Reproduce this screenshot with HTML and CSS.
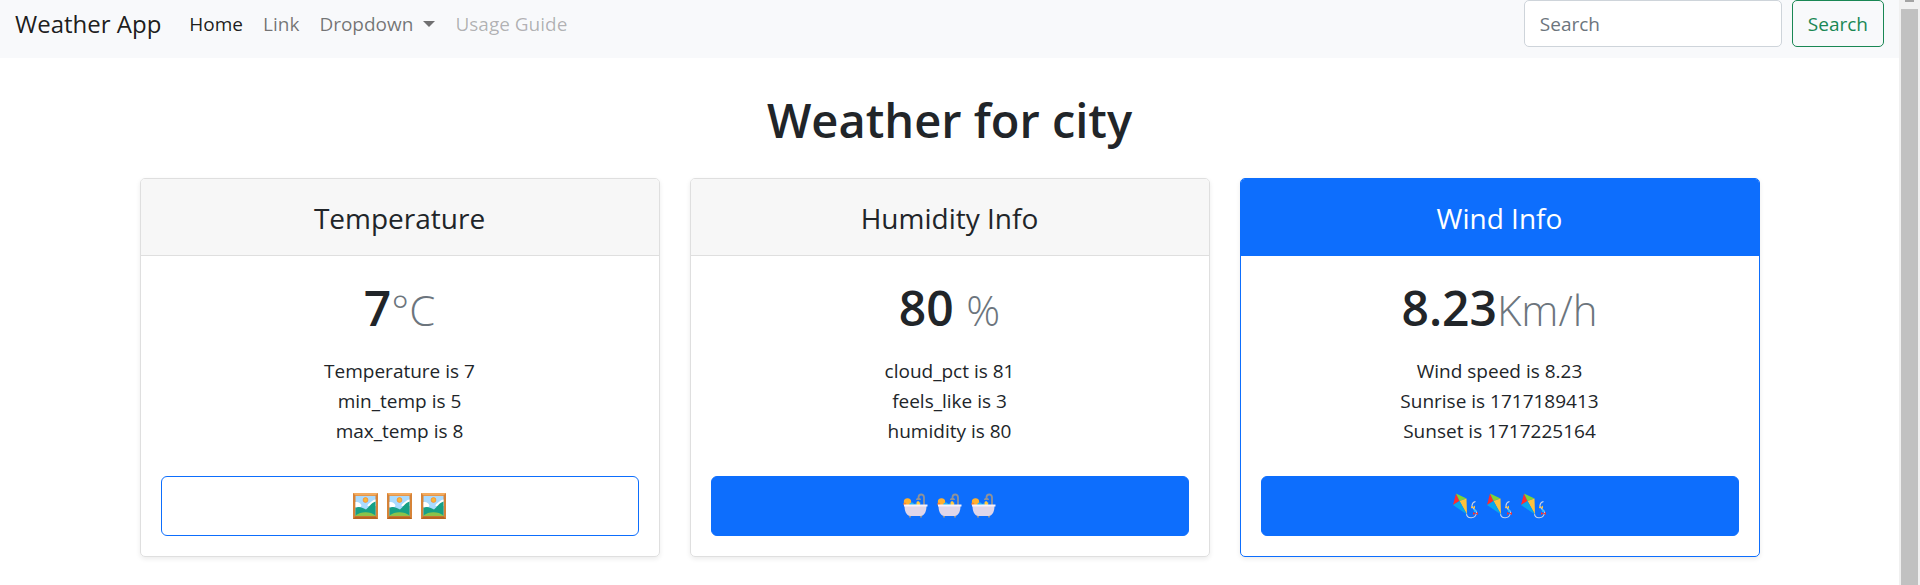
FILE: index.html
```html
<!DOCTYPE html>
<html lang="en">
<head>
<meta charset="utf-8">
<title>Weather App</title>
<link rel="stylesheet" href="styles.css">
</head>
<body>
<svg class="sprite" aria-hidden="true">
  <symbol id="frame" viewBox="0 0 25 26">
    <path fill="#d68338" d="M0 0h25v26H0z"/>
    <path fill="#f3ab5f" d="M0 0h25l-2.500 2.500h-20z"/>
    <path fill="#b86422" d="M0 26h25l-2.500-2.500h-20z"/>
    <path fill="#a9dbff" d="M2.500 3h20v20h-20z"/>
    <path fill="#fff" d="M2.500 9c3-.5 5 1 6 3.500l-1 1.500h-5zM22.500 6.500c-3 .5-4 2.500-6 3.500-1.500.8-2 2-2 3h8z"/>
    <path fill="#16a085" d="M2.500 15c3-2 6-1 10.500 1.500 3-2.500 5-6.500 9.500-8V23h-20z"/>
    <path fill="#8bc34a" d="M2.500 22.500c5-4.500 15-4.500 20 0v.5h-20z"/>
    <circle cx="12.500" cy="7" r="2.400" fill="#fbb833" stroke="#f58a35" stroke-width=".8"/>
  </symbol>
  <symbol id="bath" viewBox="0 0 25 26">
    <path fill="none" stroke="#8f9299" stroke-width="1.800" d="M21 13V4.500c0-4-5.500-4-5.500 0V6"/>
    <path fill="#8f9299" d="M13 7c0-3 5-3 5 0zM6 22h2v2.500H6zM17 22h2v2.500h-2z"/>
    <circle cx="4.500" cy="9" r="3.700" fill="#ffb02e"/>
    <circle cx="1.800" cy="11" r="1.500" fill="#ff822d"/>
    <path fill="#26b5f5" d="M6 12c1-3 4-3 5-1 2-1 5-1 7 1z"/>
    <path fill="#ffc83d" d="M13.500 9.500c1-2 3-1 3 0l1 .2-.8 2.300h-3z"/>
    <path fill="#dfd6ea" d="M1.500 13h22c0 6-2.500 10-6 10h-10c-3.500 0-6-4-6-10z"/>
    <path fill="#f7f1fb" d="M1 11.500h23.500v2H1z"/>
  </symbol>
  <symbol id="kite" viewBox="0 0 25 26">
    <path fill="none" stroke="#c9d3e8" stroke-width="1.100" d="M13.500 20.500c0 5 8.500 6.500 10-.5.800-3-5-4-4.500-7.500.2-2 1.500-3.500 3.500-4"/>
    <path fill="#ff2d2d" d="M3 .5 6.500 8 0 12z"/>
    <path fill="#7ed337" d="m3 .5 10.500 5L6.500 8z"/>
    <path fill="#ffc23c" d="M13.500 5.500 14 21.500 6.500 8z"/>
    <path fill="#09a6ed" d="M6.500 8 14 21.500 0 12z"/>
    <path fill="#ffc23c" d="m18 13 4 3v-3.500l-4 3z"/>
    <path fill="#1cb9ff" d="m20.500 15.500 3.500 3-3 .5z"/>
    <path fill="#f23838" d="m20 19 5 3v-3l-5 3z"/>
  </symbol>
</svg>

<div class="page">
  <header class="navbar">
    <a class="brand" href="#">Weather App</a>
    <nav class="nav">
      <a class="nav-link nav-link-active" href="#">Home</a>
      <a class="nav-link" href="#">Link</a>
      <a class="nav-link dropdown" href="#">Dropdown</a>
      <a class="nav-link nav-link-disabled" href="#" aria-disabled="true">Usage Guide</a>
    </nav>
    <form class="search">
      <input class="search-input" type="search" placeholder="Search" aria-label="Search">
      <button class="search-button" type="submit">Search</button>
    </form>
  </header>

  <main class="container">
    <h1 class="title">Weather for city</h1>
    <div class="cards">
      <section class="card">
        <h2 class="card-header">Temperature</h2>
        <div class="card-body">
          <p class="value">7<small class="unit">°C</small></p>
          <ul class="details">
            <li>Temperature is 7</li>
            <li>min_temp is 5</li>
            <li>max_temp is 8</li>
          </ul>
          <button class="action action-outline" type="button" aria-label="Temperature">
            <svg class="icon"><use href="#frame"/></svg>
            <svg class="icon"><use href="#frame"/></svg>
            <svg class="icon"><use href="#frame"/></svg>
          </button>
        </div>
      </section>
      <section class="card">
        <h2 class="card-header">Humidity Info</h2>
        <div class="card-body">
          <p class="value">80 <small class="unit">%</small></p>
          <ul class="details">
            <li>cloud_pct is 81</li>
            <li>feels_like is 3</li>
            <li>humidity is 80</li>
          </ul>
          <button class="action" type="button" aria-label="Humidity">
            <svg class="icon"><use href="#bath"/></svg>
            <svg class="icon"><use href="#bath"/></svg>
            <svg class="icon"><use href="#bath"/></svg>
          </button>
        </div>
      </section>
      <section class="card card-primary">
        <h2 class="card-header">Wind Info</h2>
        <div class="card-body">
          <p class="value">8.23<small class="unit">Km/h</small></p>
          <ul class="details">
            <li>Wind speed is 8.23</li>
            <li>Sunrise is 1717189413</li>
            <li>Sunset is 1717225164</li>
          </ul>
          <button class="action" type="button" aria-label="Wind">
            <svg class="icon"><use href="#kite"/></svg>
            <svg class="icon"><use href="#kite"/></svg>
            <svg class="icon"><use href="#kite"/></svg>
          </button>
        </div>
      </section>
    </div>
  </main>
</div>
<div class="scrollbar" aria-hidden="true">
  <div class="scroll-arrow"></div>
  <div class="scroll-thumb"></div>
</div>
</body>
</html>
```
FILE: styles.css
```css
* {
  box-sizing: border-box;
}

body {
  display: flex;
  min-height: 100vh;
  margin: 0;
  background: #fff;
  color: #212529;
  font: 19px/30px "Open Sans", "Noto Sans", sans-serif;
}

.sprite {
  position: absolute;
  width: 0;
  height: 0;
}

.page {
  flex: 1;
  min-width: 0;
}

.navbar {
  display: flex;
  align-items: center;
  padding: 0 15px 11px;
  background: #f8f9fb;
}

.brand {
  margin-right: 18px;
  color: rgba(0, 0, 0, .9);
  font-size: 24px;
  text-decoration: none;
}

.nav {
  display: flex;
  flex: 1;
}

.nav-link {
  padding: 0 10px;
  color: rgba(0, 0, 0, .55);
  text-decoration: none;
}

.nav-link-active {
  color: rgba(0, 0, 0, .9);
}

.nav-link-disabled {
  color: rgba(0, 0, 0, .3);
}

.dropdown {
  display: flex;
  align-items: center;
  gap: 10px;
}

.dropdown::after {
  border: 6px solid transparent;
  border-top-color: currentColor;
  border-bottom: 0;
  content: "";
}

.search {
  display: flex;
  gap: 10px;
}

.search-input,
.search-button {
  height: 47px;
  border: 1px solid #ced4da;
  border-radius: 5px;
  font: inherit;
}

.search-input {
  width: 258px;
  padding: 0 15px;
  background: #fff;
  color: #212529;
}

.search-input::placeholder {
  color: #6c757d;
}

.search-button {
  padding: 0 15px;
  border-color: #198754;
  background: transparent;
  color: #198754;
}

.container {
  max-width: 1650px;
  margin: 0 auto;
  padding: 32px 15px 28px;
}

.title {
  margin: 0 0 28px;
  font-size: 47px;
  font-weight: 600;
  line-height: 60px;
  text-align: center;
}

.cards {
  display: grid;
  grid-template-columns: repeat(3, 1fr);
  gap: 30px;
  text-align: center;
}

.card {
  overflow: hidden;
  border: 1px solid #dfdfdf;
  border-radius: 5px;
  box-shadow: 0 2px 5px rgba(0, 0, 0, .08);
}

.card-header {
  margin: 0;
  padding: 21px 20px 19px;
  border-bottom: 1px solid #dfdfdf;
  background: #f7f7f7;
  font-size: 28px;
  font-weight: 400;
  line-height: 36px;
}

.card-primary {
  border-color: #0d6efd;
}

.card-primary .card-header {
  border-color: #0d6efd;
  background: #0d6efd;
  color: #fff;
}

.card-body {
  padding: 22px 20px 20px;
}

.value {
  margin: 0 0 18px;
  font-size: 48px;
  font-weight: 600;
  line-height: 60px;
}

.unit {
  color: #6c757d;
  font-size: 42px;
  font-weight: 300;
  line-height: 1;
}

.details {
  margin: 0 0 30px;
  padding: 0;
  list-style: none;
}

.action {
  display: flex;
  align-items: center;
  justify-content: center;
  gap: 9px;
  width: 100%;
  height: 60px;
  border: 1px solid #0d6efd;
  border-radius: 6px;
  background: #0d6efd;
}

.action-outline {
  background: #fff;
}

.icon {
  width: 25px;
  height: 26px;
}

.scrollbar {
  display: flex;
  flex-direction: column;
  gap: 7px;
  width: 21px;
  padding: 0 2px;
  background: #f0f0f0;
}

.scroll-arrow {
  align-self: center;
  width: 9px;
  height: 2px;
  background: #a3a3a3;
}

.scroll-thumb {
  flex: 1;
  background: #c1c1c1;
}
```
